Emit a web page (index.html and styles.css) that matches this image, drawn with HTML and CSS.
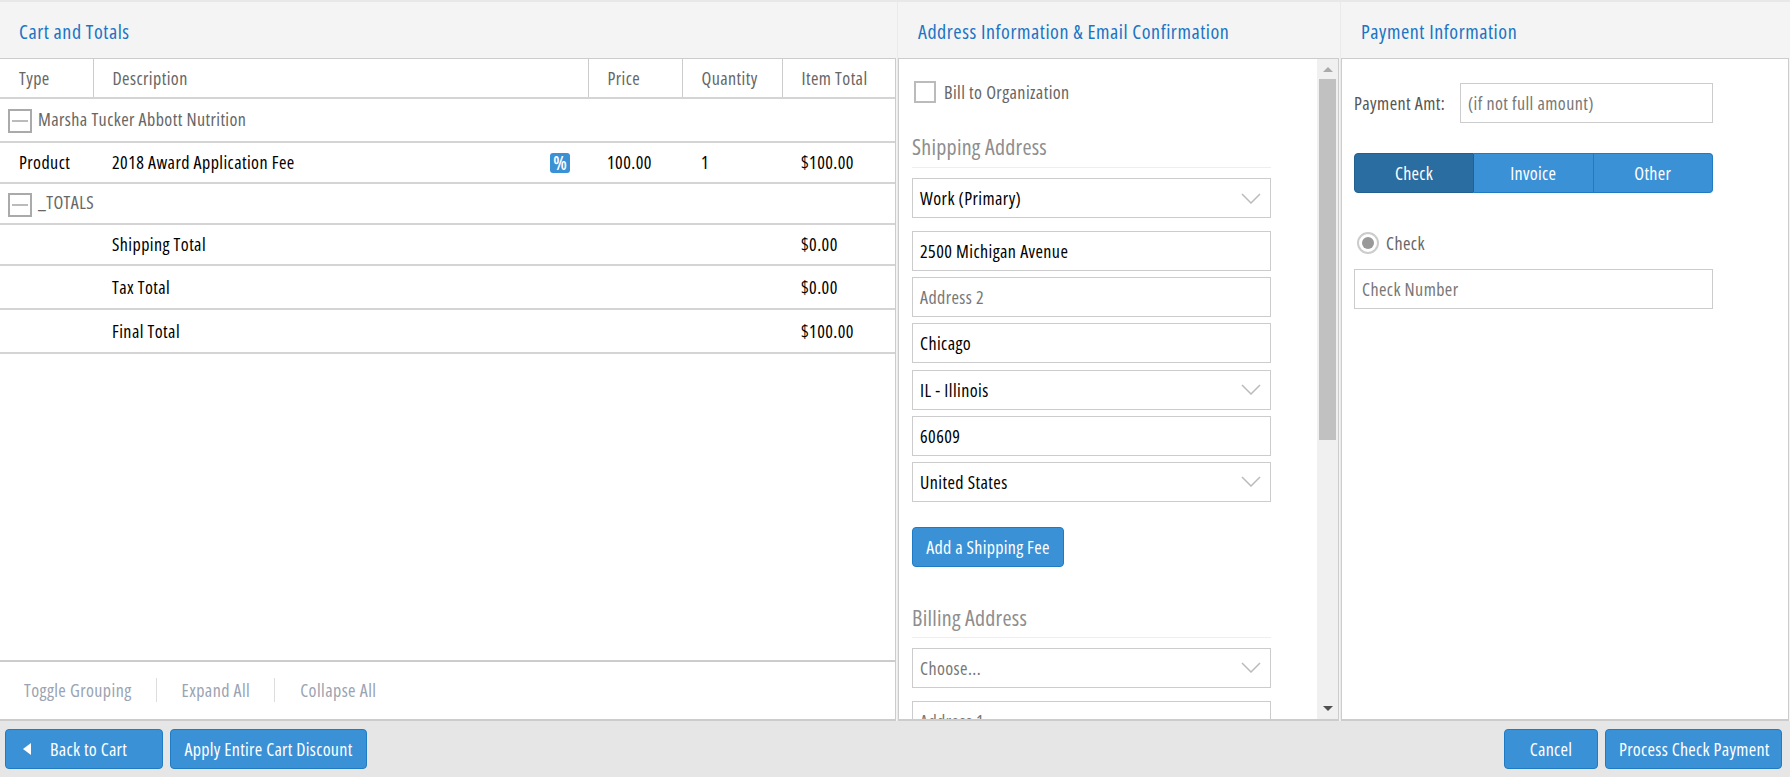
FILE: index.html
```html
<!DOCTYPE html>
<html lang="en">
<head>
    <meta charset="UTF-8">
    <meta name="viewport" content="width=device-width, initial-scale=1.0">
    <title>Checkout - Payment</title>
    <link rel="stylesheet" href="styles.css">
</head>
<body>
    <div class="panels">
        <!-- Cart -->
        <section class="panel panel-cart">
            <h2 class="panel-title">Cart and Totals</h2>
            <div class="panel-body cart-body">
                <table class="cart-table">
                    <colgroup>
                        <col class="col-type">
                        <col>
                        <col class="col-price">
                        <col class="col-qty">
                        <col class="col-total">
                    </colgroup>
                    <thead>
                        <tr>
                            <th>Type</th>
                            <th>Description</th>
                            <th>Price</th>
                            <th>Quantity</th>
                            <th>Item Total</th>
                        </tr>
                    </thead>
                    <tbody>
                        <tr class="row-group first-group">
                            <td colspan="5"><span class="toggle"></span>Marsha Tucker Abbott Nutrition</td>
                        </tr>
                        <tr class="row-product">
                            <td>Product</td>
                            <td class="desc-cell">2018 Award Application Fee<span class="discount-badge">%</span></td>
                            <td>100.00</td>
                            <td>1</td>
                            <td>$100.00</td>
                        </tr>
                        <tr class="row-group">
                            <td colspan="5"><span class="toggle"></span>_TOTALS</td>
                        </tr>
                        <tr class="row-shipping">
                            <td></td>
                            <td>Shipping Total</td>
                            <td></td>
                            <td></td>
                            <td>$0.00</td>
                        </tr>
                        <tr class="row-tall">
                            <td></td>
                            <td>Tax Total</td>
                            <td></td>
                            <td></td>
                            <td>$0.00</td>
                        </tr>
                        <tr class="row-tall">
                            <td></td>
                            <td>Final Total</td>
                            <td></td>
                            <td></td>
                            <td>$100.00</td>
                        </tr>
                    </tbody>
                </table>
                <div class="cart-links">
                    <a>Toggle Grouping</a>
                    <a>Expand All</a>
                    <a>Collapse All</a>
                </div>
            </div>
        </section>

        <!-- Address -->
        <section class="panel panel-address">
            <h2 class="panel-title">Address Information &amp; Email Confirmation</h2>
            <div class="panel-body address-body">
                <div class="address-scroll">
                    <label class="check-row"><span class="checkbox"></span>Bill to Organization</label>

                    <h3 class="section-head">Shipping Address</h3>
                    <div class="select-box first-field"><span>Work (Primary)</span><svg viewBox="0 0 20 11"><path d="M1 1l9 9 9-9"/></svg></div>
                    <div class="text-field value">2500 Michigan Avenue</div>
                    <div class="text-field">Address 2</div>
                    <div class="text-field value">Chicago</div>
                    <div class="select-box"><span>IL - Illinois</span><svg viewBox="0 0 20 11"><path d="M1 1l9 9 9-9"/></svg></div>
                    <div class="text-field value">60609</div>
                    <div class="select-box"><span>United States</span><svg viewBox="0 0 20 11"><path d="M1 1l9 9 9-9"/></svg></div>

                    <button class="btn btn-shipping">Add a Shipping Fee</button>

                    <h3 class="section-head billing-head">Billing Address</h3>
                    <div class="select-box first-field placeholder"><span>Choose...</span><svg viewBox="0 0 20 11"><path d="M1 1l9 9 9-9"/></svg></div>
                    <div class="text-field address-cut">Address 1</div>
                </div>
                <div class="scrollbar">
                    <span class="arrow-up"></span>
                    <div class="scroll-track"><div class="scroll-thumb"></div></div>
                    <span class="arrow-down"></span>
                </div>
            </div>
        </section>

        <!-- Payment -->
        <section class="panel panel-payment">
            <h2 class="panel-title">Payment Information</h2>
            <div class="panel-body payment-body">
                <div class="amount-row">
                    <span class="amount-label">Payment Amt:</span>
                    <div class="text-field amount-field">(if not full amount)</div>
                </div>
                <div class="btn-group">
                    <button class="btn-seg active">Check</button>
                    <button class="btn-seg">Invoice</button>
                    <button class="btn-seg">Other</button>
                </div>
                <label class="radio-row"><span class="radio"></span>Check</label>
                <div class="text-field check-number">Check Number</div>
            </div>
        </section>
    </div>

    <footer class="action-bar">
        <div class="action-group">
            <button class="btn btn-back"><span class="back-arrow"></span>Back to Cart</button>
            <button class="btn btn-apply">Apply Entire Cart Discount</button>
        </div>
        <div class="action-group">
            <button class="btn btn-cancel">Cancel</button>
            <button class="btn btn-process">Process Check Payment</button>
        </div>
    </footer>
</body>
</html>
```

FILE: styles.css
```css
* {
    margin: 0;
    padding: 0;
    box-sizing: border-box;
}

body {
    font-family: "Open Sans", sans-serif;
    font-stretch: 75%;
    font-size: 18px;
    font-weight: 375;
    letter-spacing: 0.42px;
    color: #000;
    background: #fff;
    height: 777px;
    display: flex;
    flex-direction: column;
    overflow: hidden;
}

.panels {
    display: flex;
    height: 721px;
    background: #f4f4f4;
    border-top: 2px solid #e8e8e8;
}

.panel {
    display: flex;
    flex-direction: column;
}

.panel-cart {
    width: 897px;
}

.panel-address {
    width: 443px;
    border-left: 1px solid #eaeaea;
}

.panel-payment {
    width: 450px;
    border-left: 1px solid #eaeaea;
}

.panel-title {
    height: 56px;
    padding-left: 19px;
    font-size: 20px;
    font-weight: inherit;
    letter-spacing: 0.55px;
    line-height: 60px;
    color: #1b75c4;
}

.panel-address .panel-title {
    padding-left: 20px;
}

.panel-payment .panel-title {
    padding-left: 20px;
}

.panel-body {
    flex: 1;
    min-height: 0;
    margin-right: 1px;
    background: #fff;
    border: 1px solid #ccc;
    border-top-width: 1px;
    border-bottom-width: 2px;
}

/* Cart */
.cart-body {
    display: flex;
    flex-direction: column;
    justify-content: space-between;
    border-left: 0;
}

.cart-table {
    width: 100%;
    table-layout: fixed;
    border-collapse: collapse;
}

.col-type {
    width: 93px;
}

.col-price {
    width: 94px;
}

.col-qty {
    width: 100px;
}

.col-total {
    width: 113px;
}

.cart-table th,
.cart-table td {
    padding-left: 19px;
    text-align: left;
    font-weight: inherit;
    border-bottom: 2px solid #d4d4d4;
}

.cart-table th {
    height: 39px;
    color: #666;
    border-left: 1px solid #ccc;
}

.cart-table th:first-child {
    border-left: 0;
}

.row-group td {
    height: 41px;
    padding-left: 8px;
    color: #666;
}

.first-group td {
    height: 44px;
}

.row-product td {
    height: 41px;
    padding-bottom: 2px;
}

.row-shipping td {
    height: 41px;
    padding-bottom: 2px;
}

.row-tall td {
    height: 44px;
    padding-bottom: 1px;
}

.toggle {
    display: inline-block;
    position: relative;
    width: 24px;
    height: 24px;
    margin-right: 6px;
    vertical-align: middle;
    border: 2px solid #aaa;
}

.toggle::after {
    content: "";
    position: absolute;
    left: 2px;
    right: 2px;
    top: 9px;
    height: 2px;
    background: #bbb;
}

.desc-cell {
    position: relative;
}

.discount-badge {
    position: absolute;
    left: 457px;
    top: 10px;
    width: 20px;
    height: 20px;
    border-radius: 3px;
    background: #3a91d6;
    color: #fff;
    font-size: 19px;
    font-weight: 600;
    letter-spacing: 0;
    line-height: 20px;
    text-align: center;
}

.cart-links {
    display: flex;
    align-items: center;
    height: 59px;
    padding-left: 24px;
    padding-bottom: 2px;
    border-top: 2px solid #ccc;
    color: #9aa3b2;
}

.cart-links a {
    padding-right: 24px;
    margin-right: 25px;
    border-right: 1px solid #ddd;
}

.cart-links a:last-child {
    border-right: 0;
}

/* Address */
.address-body {
    display: flex;
}

.address-scroll {
    flex: 1;
    overflow: hidden;
    padding: 0 46px 0 13px;
}

.check-row {
    display: flex;
    align-items: center;
    height: 22px;
    margin-top: 22px;
    padding-left: 2px;
    color: #666;
}

.checkbox {
    width: 22px;
    height: 22px;
    margin-right: 8px;
    border: 2px solid #bbb;
}

.section-head {
    height: 36px;
    margin-top: 29px;
    font-size: 22px;
    font-weight: inherit;
    letter-spacing: 0.25px;
    line-height: 28px;
    color: #8e8e8e;
    border-bottom: 1px solid #eee;
}

.billing-head {
    margin-top: 35px;
    line-height: 30px;
}

.select-box,
.text-field {
    display: flex;
    align-items: center;
    justify-content: space-between;
    height: 40px;
    margin-top: 6.2px;
    padding: 0 7px;
    border: 1px solid #ccc;
    background: #fff;
    color: #777;
}

.first-field {
    margin-top: 10px;
}

.first-field + .text-field {
    margin-top: 13px;
}

.select-box,
.text-field.value {
    color: #000;
}

.select-box.placeholder {
    color: #777;
}

.select-box svg {
    width: 20px;
    height: 11px;
    margin-right: 2px;
    fill: none;
    stroke: #bbb;
    stroke-width: 1.5;
}

.btn {
    height: 40px;
    padding: 0 13px;
    font-family: inherit;
    font-stretch: inherit;
    font-size: 18px;
    font-weight: inherit;
    letter-spacing: 0.3px;
    white-space: nowrap;
    color: #fff;
    background: #3a91d6;
    border: 1px solid #1f7cc4;
    border-radius: 4px;
}

.btn-shipping {
    width: 152px;
    margin-top: 25px;
}

.scrollbar {
    display: flex;
    flex-direction: column;
    align-items: center;
    width: 21px;
    background: #f0f0f0;
}

.arrow-up,
.arrow-down {
    width: 0;
    height: 0;
    border-left: 5px solid transparent;
    border-right: 5px solid transparent;
}

.arrow-up {
    margin: 8px 0 7px;
    border-bottom: 5px solid #aaa;
}

.arrow-down {
    margin: 5px 0 8px;
    border-top: 5px solid #505050;
}

.scroll-track {
    flex: 1;
    width: 100%;
    padding: 0 2px;
}

.scroll-thumb {
    height: 361px;
    background: #c1c1c1;
}

/* Payment */
.payment-body {
    padding: 0 12px;
}

.amount-row {
    display: flex;
    align-items: center;
    margin-top: 24px;
}

.amount-label {
    width: 106px;
    white-space: nowrap;
    color: #555;
}

.amount-field {
    width: 253px;
    margin-top: 0;
}

.btn-group {
    display: flex;
    height: 40px;
    margin-top: 30px;
    width: 359px;
}

.btn-seg {
    flex: 1;
    font-family: inherit;
    font-stretch: inherit;
    font-size: 18px;
    font-weight: inherit;
    letter-spacing: 0.3px;
    color: #fff;
    background: #3a91d6;
    border: 1px solid #1f7cc4;
    border-left-width: 0;
}

.btn-seg:first-child {
    flex: 0 0 120px;
    border-left-width: 1px;
    border-radius: 4px 0 0 4px;
}

.btn-seg:last-child {
    border-radius: 0 4px 4px 0;
}

.btn-seg.active {
    background: #2a6da0;
    border-color: #22618f;
}

.radio-row {
    display: flex;
    align-items: center;
    height: 22px;
    margin-top: 39px;
    padding-left: 3px;
    color: #666;
}

.radio {
    position: relative;
    width: 22px;
    height: 22px;
    margin-right: 7px;
    border: 2px solid #ccc;
    border-radius: 50%;
}

.radio::after {
    content: "";
    position: absolute;
    left: 3px;
    top: 3px;
    width: 12px;
    height: 12px;
    border-radius: 50%;
    background: #999;
}

.check-number {
    width: 359px;
    margin-top: 15px;
}

/* Bottom bar */
.action-bar {
    display: flex;
    justify-content: space-between;
    height: 56px;
    padding: 8px 8px 0 5px;
    background: #e6e6e6;
}

.action-group {
    display: flex;
    gap: 7px;
}

.btn-back {
    position: relative;
    width: 158px;
    padding-left: 44px;
    text-align: left;
}

.back-arrow {
    position: absolute;
    left: 17px;
    top: 13px;
    width: 0;
    height: 0;
    border-top: 6px solid transparent;
    border-bottom: 6px solid transparent;
    border-right: 8px solid #fff;
}

.btn-apply {
    width: 197px;
}

.btn-cancel {
    width: 94px;
}

.btn-process {
    width: 177px;
}
```
